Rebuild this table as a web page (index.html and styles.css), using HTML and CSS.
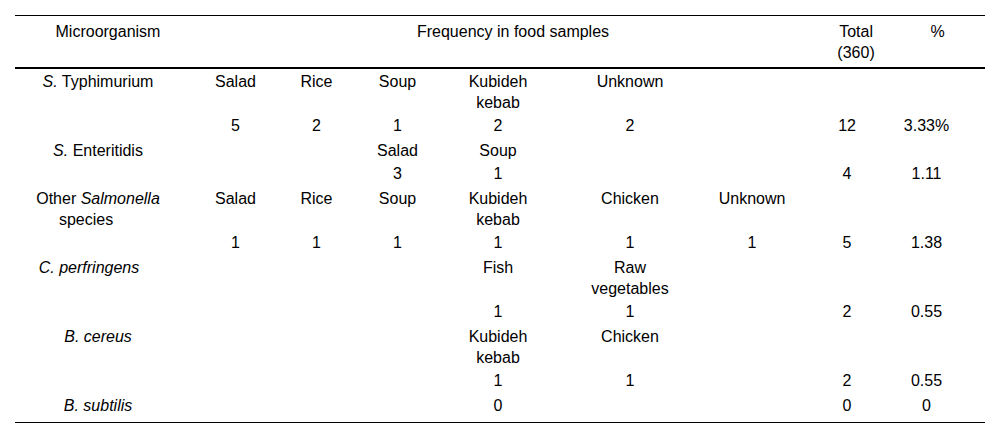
FILE: index.html
```html
<!DOCTYPE html>
<html lang="en">
<head>
<meta charset="utf-8">
<title>Frequency of microorganisms in food samples</title>
<link rel="stylesheet" href="styles.css">
</head>
<body>
<table class="freq">
  <colgroup>
    <col class="w1"><col class="w2"><col class="w3"><col class="w4"><col class="w5"><col class="w6"><col class="w7"><col class="w8"><col class="w9">
  </colgroup>
  <thead>
    <tr>
      <th class="h-micro">Microorganism</th>
      <th class="h-freq" colspan="6">Frequency in food samples</th>
      <th class="h-total">Total<br>(360)</th>
      <th class="h-pct">%</th>
    </tr>
  </thead>
  <tbody>
    <tr class="lab first">
      <td><i>S.</i> Typhimurium</td><td>Salad</td><td>Rice</td><td>Soup</td><td>Kubideh<br>kebab</td><td>Unknown</td><td></td><td></td><td></td>
    </tr>
    <tr class="val">
      <td></td><td>5</td><td>2</td><td>1</td><td>2</td><td>2</td><td></td><td>12</td><td>3.33%</td>
    </tr>
    <tr class="lab">
      <td><i>S.</i> Enteritidis</td><td></td><td></td><td>Salad</td><td>Soup</td><td></td><td></td><td></td><td></td>
    </tr>
    <tr class="val">
      <td></td><td></td><td></td><td>3</td><td>1</td><td></td><td></td><td>4</td><td>1.11</td>
    </tr>
    <tr class="lab">
      <td>Other <i>Salmonella</i><br><span class="tail-sp">species</span></td><td>Salad</td><td>Rice</td><td>Soup</td><td>Kubideh<br>kebab</td><td>Chicken</td><td>Unknown</td><td></td><td></td>
    </tr>
    <tr class="val">
      <td></td><td>1</td><td>1</td><td>1</td><td>1</td><td>1</td><td>1</td><td>5</td><td>1.38</td>
    </tr>
    <tr class="lab">
      <td><i class="tail-cp">C. perfringens</i></td><td></td><td></td><td></td><td>Fish</td><td>Raw<br>vegetables</td><td></td><td></td><td></td>
    </tr>
    <tr class="val">
      <td></td><td></td><td></td><td></td><td>1</td><td>1</td><td></td><td>2</td><td>0.55</td>
    </tr>
    <tr class="lab">
      <td><i>B. cereus</i></td><td></td><td></td><td></td><td>Kubideh<br>kebab</td><td>Chicken</td><td></td><td></td><td></td>
    </tr>
    <tr class="val">
      <td></td><td></td><td></td><td></td><td>1</td><td>1</td><td></td><td>2</td><td>0.55</td>
    </tr>
    <tr class="lab last">
      <td><i>B. subtilis</i></td><td></td><td></td><td></td><td>0</td><td></td><td></td><td>0</td><td>0</td>
    </tr>
  </tbody>
</table>
</body>
</html>
```
FILE: styles.css
```css
html, body {
  margin: 0;
  background: #fff;
}
body {
  padding: 15px;
  font-family: "Liberation Sans", Arial, sans-serif;
  font-size: 16px;
  line-height: 21px;
  color: #000;
}
.freq {
  width: 970px;
  table-layout: fixed;
  border-collapse: separate;
  border-spacing: 0;
}
.w1 { width: 152px; }
.w2 { width: 109px; }
.w3 { width: 81px; }
.w4 { width: 91px; }
.w5 { width: 116px; }
.w6 { width: 127px; }
.w7 { width: 109px; }
.w8 { width: 87px; }
.w9 { width: 98px; }

.freq th {
  font-weight: normal;
  text-align: center;
  vertical-align: top;
  padding: 5px 0 4px 0;
  border-top: 1px solid #000;
  border-bottom: 2px solid #000;
}
.freq .h-micro { padding-left: 34px; }
.freq .h-freq { padding-left: 59px; }
.freq .h-total { padding-left: 25px; }
.freq .h-pct { padding-left: 3px; }

.freq td {
  text-align: center;
  vertical-align: top;
  padding: 0;
}
.freq tr.lab td { padding-top: 3px; }
.freq tr.lab.first td { padding-top: 2px; }
.freq tr.val td { padding-top: 2px; padding-bottom: 1px; }
.freq tr.last td {
  padding-bottom: 6px;
  border-bottom: 1px solid #000;
}

.freq td:nth-child(1) { padding-left: 14px; }
.freq td:nth-child(2) { padding-left: 28px; }
.freq td:nth-child(4) { padding-right: 10px; }
.freq td:nth-child(5) { padding-right: 16px; }
.freq td:nth-child(6) { padding-left: 5px; }
.freq td:nth-child(7) { padding-left: 13px; }
.freq td:nth-child(8) { padding-left: 7px; }
.freq td:nth-child(9) { padding-right: 19px; }

.tail-sp { margin-right: 24px; }
.tail-cp { margin-right: 18px; }
```
